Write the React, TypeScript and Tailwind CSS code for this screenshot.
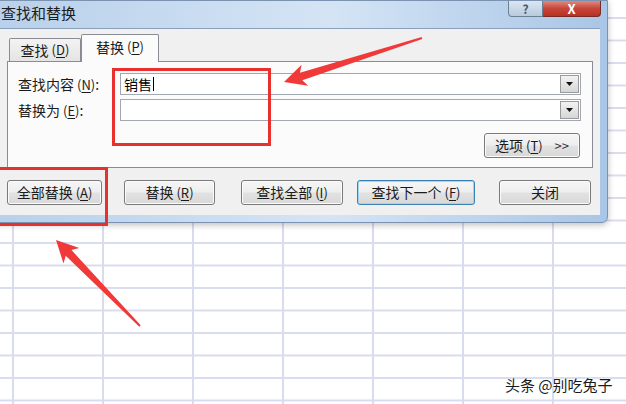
import React from "react";

const FONT = "font-['Noto_Sans_CJK_SC','Noto_Sans',sans-serif]";

function Key({ k }: { k: string }) {
  return (
    <span className="ml-[3px] text-[13px]">
      (<span className="underline underline-offset-2">{k}</span>)
    </span>
  );
}

function WinButton({
  children,
  className = "",
  focused = false,
}: {
  children: React.ReactNode;
  className?: string;
  focused?: boolean;
}) {
  return (
    <div
      className={
        "h-[25px] flex items-center justify-center rounded-[3px] border text-[14px] text-[#1b1b1b] bg-[linear-gradient(to_bottom,#f6f6f6_0%,#eeeeee_48%,#e2e2e2_52%,#d8d8d8_100%)] " +
        (focused
          ? "border-[#3c7fb1] shadow-[inset_0_0_0_1px_#9fd5f3] "
          : "border-[#7a7a7a] shadow-[inset_0_0_0_1px_#fbfbfb] ") +
        className
      }
    >
      {children}
    </div>
  );
}

function ComboInput({ value }: { value?: string }) {
  return (
    <div className="flex h-[22px] flex-1 border border-[#a3a7b0] bg-white">
      <div className="flex flex-1 items-center pl-[3px] text-[14px] text-black">
        {value}
        {value && <span className="ml-[1px] inline-block h-[14px] w-px bg-black" />}
      </div>
      <div className="m-px flex w-[19px] items-center justify-center border border-[#9a9a9a] bg-[linear-gradient(to_bottom,#f2f2f2,#d6d6d6)]">
        <svg width="7" height="4" viewBox="0 0 7 4">
          <path d="M0 0h7L3.5 4z" fill="#111" />
        </svg>
      </div>
    </div>
  );
}

function Dialog() {
  return (
    <div className="absolute left-[-8px] top-0 flex h-[223px] w-[616px] flex-col rounded-b-[6px] border border-[#7b93b0] bg-[linear-gradient(to_right,#b8d0ea,#d4e4f5_55%,#a9c6e6)] shadow-[0_2px_6px_rgba(0,0,0,0.25)]">
      {/* title bar */}
      <div className="flex h-[27px] items-start justify-between">
        <div className="pl-[8px] pt-[3px] text-[15px] leading-[18px] text-[#1c1c1c]">查找和替换</div>
        <div className="mr-[6px] flex">
          <div className="flex h-[16px] w-[35px] items-center justify-center rounded-bl-[4px] border border-t-0 border-[#6d7f95] bg-[linear-gradient(to_bottom,#dbe6f2,#b9cade)] text-[12px] font-bold leading-none text-[#4a5566]">
            ?
          </div>
          <div className="flex h-[16px] w-[58px] items-center justify-center rounded-br-[4px] border border-l-0 border-t-0 border-[#7a2a24] bg-[linear-gradient(to_bottom,#e08a7e,#c7463a_50%,#b83222)] text-[13px] font-bold leading-none text-white">
            X
          </div>
        </div>
      </div>

      {/* body */}
      <div className="mx-[7px] mb-[7px] flex flex-1 flex-col border-t border-[#8aa0bb] bg-[#f0f0f0]">
        {/* tabs */}
        <div className="flex items-end pl-[9px] pt-[5px]">
          <div className="flex h-[23px] w-[72px] items-center justify-center rounded-t-[2px] border border-b-0 border-[#898c95] bg-[linear-gradient(to_bottom,#f3f3f3,#e4e4e4)] text-[14px] text-[#1b1b1b]">
            查找<Key k="D" />
          </div>
          <div className="relative z-10 -mb-px flex h-[28px] w-[78px] items-start justify-center rounded-t-[2px] border border-b-0 border-[#898c95] bg-[#fbfbfb] pt-[2px] text-[14px] text-[#1b1b1b]">
            替换<Key k="P" />
          </div>
        </div>

        {/* panel */}
        <div className="mx-[7px] flex h-[107px] flex-col border border-[#898c95] bg-[#fbfbfb] pl-[10px] pr-[11px] pt-[11px]">
          <div className="flex items-center">
            <div className="w-[102px] text-[14px] text-[#1b1b1b]">
              查找内容<Key k="N" />:
            </div>
            <ComboInput value="销售" />
          </div>
          <div className="mt-[4px] flex items-center">
            <div className="w-[102px] text-[14px] text-[#1b1b1b]">
              替换为<Key k="E" />:
            </div>
            <ComboInput />
          </div>
          <div className="mt-[12px] flex justify-end pr-[1px]">
            <WinButton className="w-[96px] gap-[12px]">
              <span>
                选项<Key k="T" />
              </span>
              <span className="text-[13px] text-[#333]">&gt;&gt;</span>
            </WinButton>
          </div>
        </div>

        {/* buttons */}
        <div className="mt-[12px] flex pl-[7px]">
          <WinButton className="w-[95px]">
            全部替换<Key k="A" />
          </WinButton>
          <WinButton className="ml-[22px] w-[91px]">
            替换<Key k="R" />
          </WinButton>
          <WinButton className="ml-[26px] w-[102px]">
            查找全部<Key k="I" />
          </WinButton>
          <WinButton focused className="ml-[14px] w-[118px]">
            查找下一个<Key k="F" />
          </WinButton>
          <WinButton className="ml-[24px] w-[92px]">关闭</WinButton>
        </div>
      </div>
    </div>
  );
}

export default function App() {
  return (
    <div
      className={
        "relative h-[404px] w-[626px] overflow-hidden bg-white bg-[linear-gradient(to_right,#d9dcee_2px,transparent_2px),linear-gradient(to_bottom,#d9dcee_2px,transparent_2px)] bg-[size:90px_22.5px] bg-[position:12px_17px] " +
        FONT
      }
    >
      <Dialog />

      {/* red highlight boxes */}
      <div className="absolute left-[112px] top-[68px] h-[78px] w-[159px] border-[3px] border-[#e8302e]" />
      <div className="absolute left-[-10px] top-[167px] h-[59px] w-[118px] border-[3px] border-[#e8302e]" />

      {/* arrows */}
      <svg className="pointer-events-none absolute left-0 top-0" width="626" height="404" viewBox="0 0 626 404">
        <polygon
          points="284,82 308.2,85.8 302.3,80.3 422.3,39 421.7,37 299.9,72.7 301.6,64.8"
          fill="#f03a3a"
        />
        <polygon
          points="56,240 79.3,248.1 71.5,250.1 140.7,325.3 139.3,326.7 65.7,255.7 63.5,263.5"
          fill="#f03a3a"
        />
      </svg>

      <div className="absolute left-[505px] top-[376px] text-[15px] leading-[18px] text-[#1a1a1a] [text-shadow:0_0_2px_#fff,0_0_2px_#fff,0_0_1px_#fff]">
        头条 @别吃兔子
      </div>
    </div>
  );
}
